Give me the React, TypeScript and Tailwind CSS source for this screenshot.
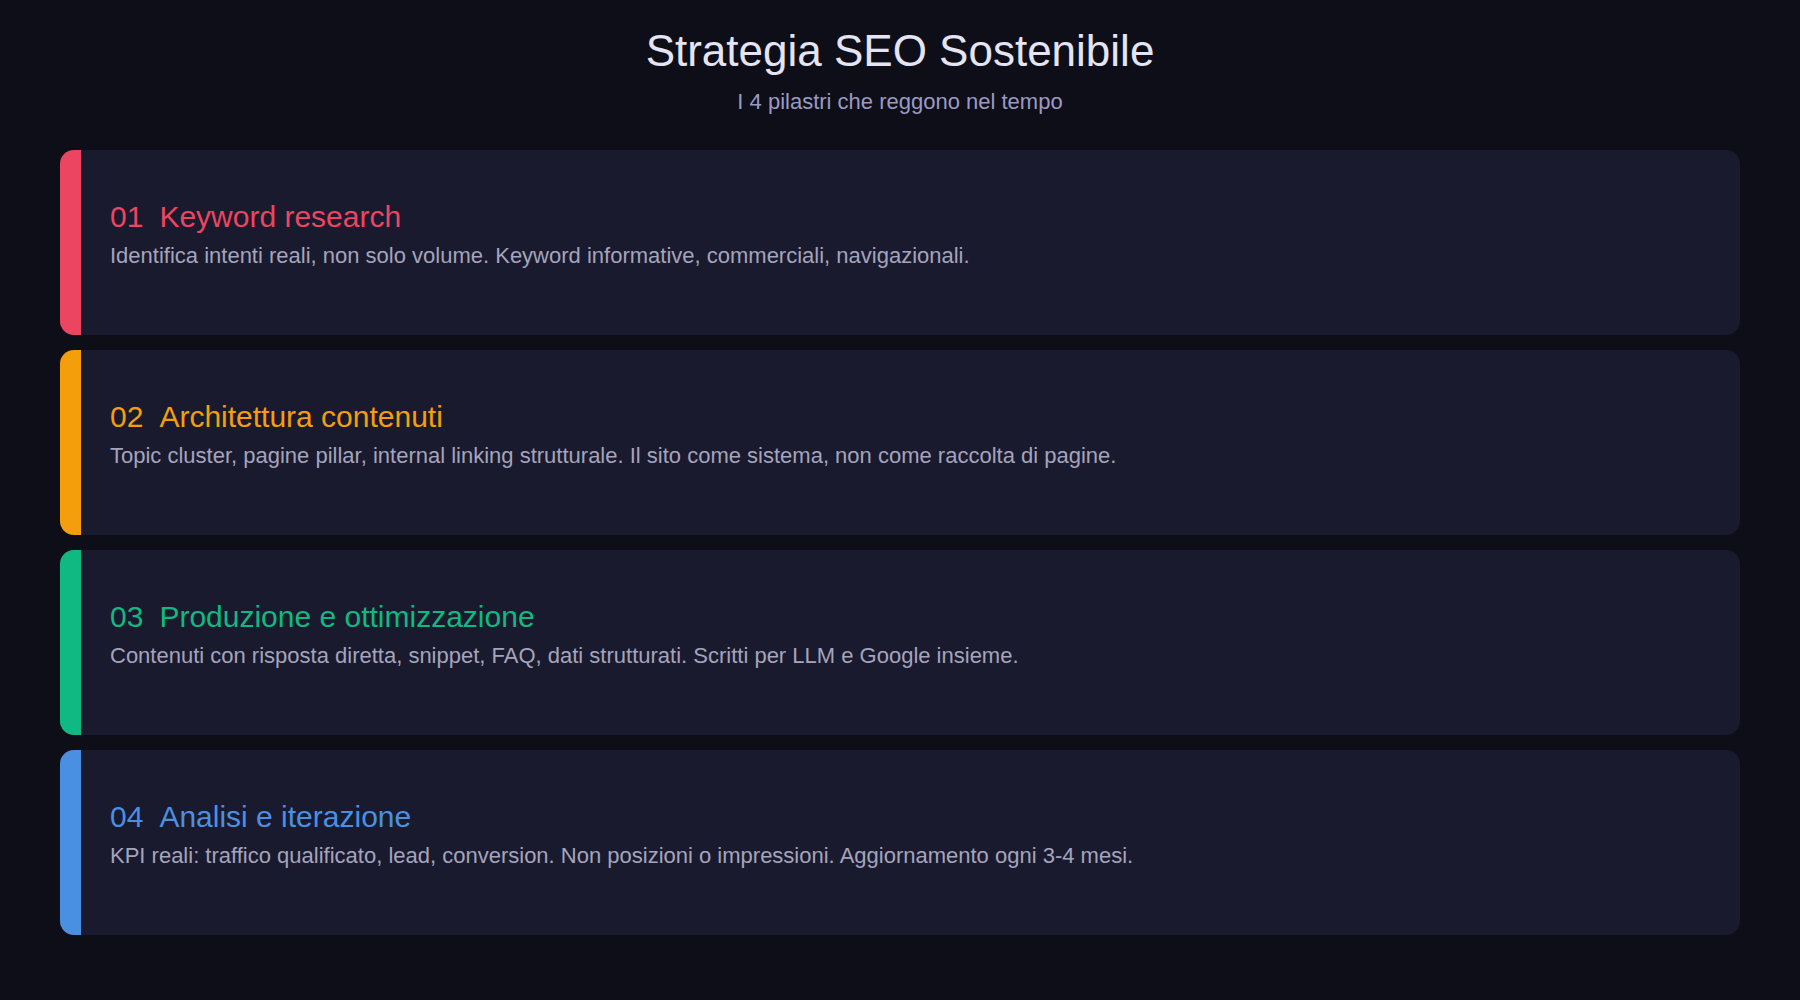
const items = [
  { n: "01", t: "Keyword research", d: "Identifica intenti reali, non solo volume. Keyword informative, commerciali, navigazionali.", c: "text-[#ec4561]", b: "bg-[#ec4561]" },
  { n: "02", t: "Architettura contenuti", d: "Topic cluster, pagine pillar, internal linking strutturale. Il sito come sistema, non come raccolta di pagine.", c: "text-[#f59e0b]", b: "bg-[#f59e0b]" },
  { n: "03", t: "Produzione e ottimizzazione", d: "Contenuti con risposta diretta, snippet, FAQ, dati strutturati. Scritti per LLM e Google insieme.", c: "text-[#10b981]", b: "bg-[#10b981]" },
  { n: "04", t: "Analisi e iterazione", d: "KPI reali: traffico qualificato, lead, conversion. Non posizioni o impressioni. Aggiornamento ogni 3-4 mesi.", c: "text-[#4a90e2]", b: "bg-[#4a90e2]" },
];

export default function App() {
  return (
    <div className="w-[1800px] h-[1000px] bg-[#0e0e18] px-[60px] pt-[23px]" style={{ fontFamily: '"Liberation Sans", Arial, sans-serif' }}>
      <h1 className="text-center text-[44px] leading-[56px] text-[#e4e4f4]">Strategia SEO Sostenibile</h1>
      <p className="text-center text-[22px] leading-[30px] mt-[8px] text-[#9a9ac4]">I 4 pilastri che reggono nel tempo</p>
      <div className="mt-[33px] flex flex-col gap-[15px]">
        {items.map((it) => (
          <div key={it.n} className="h-[185px] flex rounded-[14px] bg-[#1a1a2e] overflow-hidden">
            <div className={`w-[21px] ${it.b} rounded-l-[4px]`} />
            <div className="flex flex-col justify-center pl-[29px] pb-[16px]">
              <div className={`text-[30px] leading-[36px] ${it.c} flex gap-[16px]`}>
                <span>{it.n}</span><span>{it.t}</span>
              </div>
              <div className="mt-[7px] text-[22px] leading-[28px] text-[#a4a4bc]">{it.d}</div>
            </div>
          </div>
        ))}
      </div>
    </div>
  );
}
